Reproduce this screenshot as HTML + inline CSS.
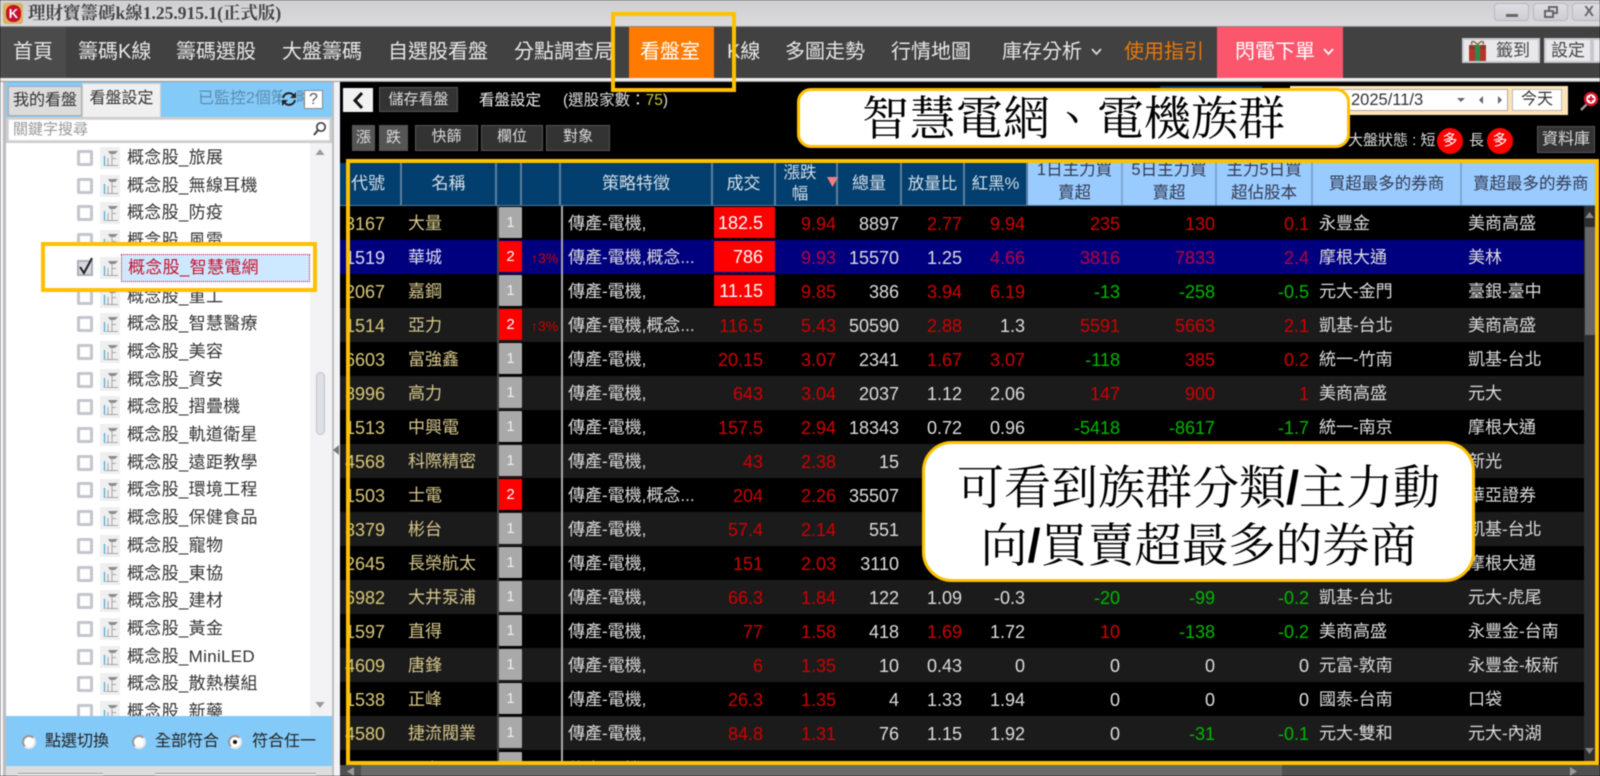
<!DOCTYPE html>
<html lang="zh-Hant"><head><meta charset="utf-8"><title>理財寶籌碼k線</title>
<style>
*{box-sizing:border-box;margin:0;padding:0}
html,body{width:1600px;height:776px;overflow:hidden;background:#000}
body{position:relative;font-family:"Liberation Sans","Noto Sans CJK TC",sans-serif;color:#ddd}
#root{position:absolute;left:0;top:0;width:1600px;height:776px;overflow:hidden;background:#000;filter:blur(.45px)}
.a{position:absolute;white-space:nowrap}
.n{position:absolute;top:27px;height:50px;line-height:50px;font-size:20px;color:#e8e8e8;white-space:nowrap}
.wb{position:absolute;top:3px;height:18px;width:35px;border:1px solid #b8b8bc;border-radius:4px;background:linear-gradient(#dedee2,#cfcfd3)}
.btn{position:absolute;background:#333;border:1px solid #555;color:#ddd;font-size:15px;text-align:center}
.tb{position:absolute;background:#e9e9ec;border:2px solid #c8c8cc;color:#444;font-size:17px;text-align:center;line-height:21px}
.li{position:absolute;left:0;width:304px;height:28px;font-size:17px;color:#333;line-height:28px}
.li b{position:absolute;left:71px;top:6px;width:16px;height:16px;background:#fff;border:3px solid #c5c5cd;border-radius:2px}
.li svg{position:absolute;left:94px;top:3px}
.li span{position:absolute;left:121px;letter-spacing:.3px;white-space:nowrap}
.rd{position:absolute;top:735px;width:14px;height:14px;border-radius:50%;background:#fff;border:2px solid #999;border-right-color:#e8e8e8;border-bottom-color:#e8e8e8}
.h{position:absolute;top:163px;height:42px;background:#023f6e;border-right:2px solid #5c7f9e;color:#d5dee8;font-size:17px;text-align:center;line-height:42px;overflow:hidden}
.l{background:#99cbff;border-right:2px solid #7fa6cf;color:#333a52}
.l2{line-height:23px;font-size:16.5px;padding-top:0;top:159px;height:46px;z-index:0}
#rows{position:absolute;left:340px;top:206px;width:1244px;height:559px;overflow:hidden}
.r{position:absolute;left:0;width:1244px;height:34px;font-size:18px;line-height:34px}
.r:nth-child(even){background:#1b1b1b}
.r span{position:absolute;white-space:nowrap;top:1px}
.sel{background:#00007f!important}
.c{left:0;width:45px;text-align:right;color:#d8c878}
.m{left:68px;font-size:17px;color:#d8c98e}
.b{left:159px;top:1px!important;width:23px;height:31px;background:#a9a9a9;color:#eee;font-size:15px;text-align:center;line-height:31px;border-radius:1px}
.b.t{background:#f00;color:#fff}
.p{left:191px;font-size:14px;color:#d00000}
.s{left:228px;font-size:17px;color:#dcdcdc}
.x{left:374px;top:1px!important;width:61px;height:31px;line-height:32px;background:#f00;color:#fff;text-align:right;padding-right:12px}
.o{left:354px;width:69px;text-align:right;color:#d00000}
.f{left:436px;width:60px;text-align:right;color:#d00000}
.v{left:500px;width:59px;text-align:right;color:#ddd}
.e{left:563px;width:59px;text-align:right;color:#ddd}
.k{left:626px;width:59px;text-align:right;color:#ddd}
.d1{left:690px;width:90px;text-align:right;color:#ddd}
.d5{left:785px;width:90px;text-align:right;color:#ddd}
.dp{left:880px;width:89px;text-align:right;color:#ddd}
.bb{left:979px;font-size:17px;color:#ddd}
.sb{left:1128px;font-size:17px;color:#ddd}
.red{color:#d00000!important}.grn{color:#00b800!important}
.call{position:absolute;background:#fff;border:3.5px solid #ffc000;color:#000;font-family:"Noto Serif CJK SC","Liberation Serif",serif;font-size:47px;text-align:center;font-weight:400}
.call i{font-style:normal;font-weight:700;font-family:"Liberation Sans",sans-serif}
</style></head><body><div id="root">
<svg width="0" height="0" style="position:absolute"><symbol id="ic" viewBox="0 0 20 22"><rect width="20" height="22" fill="#efefef"/><path d="M8 4h10l-3 3h-5z" fill="#8c8c8c"/><path d="M12 7v11M8 11v7M6 18.500h12M12 11.500h4" fill="none" stroke="#a6a6a6" stroke-width="1"/><path d="M4.500 9v10" stroke="#4aa7dc" stroke-width="1.200"/></symbol></svg>

<!-- title bar -->
<div class="a" style="left:0;top:0;width:1600px;height:27px;background:linear-gradient(#cfcfd2,#dadadd);border-bottom:1px solid #8a8a8a"></div>
<div class="a" style="left:3px;top:3px;width:20px;height:21px;background:#d8b45a;border-radius:3px"></div>
<div class="a" style="left:6px;top:5px;width:15px;height:17px;background:#c8102e;border-radius:7px;color:#fff;font-size:13px;font-weight:700;text-align:center;line-height:17px">K</div>
<div class="a" style="left:28px;top:2px;font-family:'Liberation Serif','Noto Serif CJK SC',serif;font-size:17.5px;line-height:22px;color:#444;font-weight:700">理財寶籌碼k線1.25.915.1(正式版)</div>
<div class="wb" style="left:1494px"><div class="a" style="left:11px;top:10px;width:12px;height:3px;background:#666"></div></div>
<div class="wb" style="left:1533px"><div class="a" style="left:14px;top:2px;width:10px;height:8px;border:2px solid #666"></div><div class="a" style="left:10px;top:6px;width:10px;height:8px;border:2px solid #666;background:#d8d8dc"></div></div>
<div class="wb" style="left:1572px;width:40px;font-size:15px;font-weight:700;color:#666;line-height:15px;padding-left:11px">X</div>

<!-- nav -->
<div class="a" style="left:0;top:27px;width:1600px;height:51px;background:#414141"></div>
<div class="a" style="left:0;top:27px;width:66px;height:51px;background:#4b4b4b"></div>
<div class="a" style="left:629px;top:27px;width:85px;height:51px;background:#ff7a00"></div>
<div class="a" style="left:1217px;top:27px;width:126px;height:51px;background:#fb566c"></div>
<div class="n" style="left:13px">首頁</div>
<div class="n" style="left:78px">籌碼K線</div>
<div class="n" style="left:176px">籌碼選股</div>
<div class="n" style="left:282px">大盤籌碼</div>
<div class="n" style="left:388px">自選股看盤</div>
<div class="n" style="left:514px">分點調查局</div>
<div class="n" style="left:640px;color:#fff">看盤室</div>
<div class="n" style="left:727px">K線</div>
<div class="n" style="left:785px">多圖走勢</div>
<div class="n" style="left:891px">行情地圖</div>
<div class="n" style="left:1002px">庫存分析</div>
<svg class="a" style="left:1091px;top:48px" width="11" height="8"><path d="M1 1l4.500 5L10 1" fill="none" stroke="#ddd" stroke-width="1.700"/></svg>
<div class="n" style="left:1124px;color:#e8780c">使用指引</div>
<div class="n" style="left:1235px;color:#fff">閃電下單</div>
<svg class="a" style="left:1323px;top:48px" width="11" height="8"><path d="M1 1l4.500 5L10 1" fill="none" stroke="#fff" stroke-width="1.700"/></svg>
<div class="tb" style="left:1462px;top:38px;width:78px;height:25px;padding-left:24px">籤到</div>
<svg class="a" style="left:1468px;top:40px" width="19" height="21"><rect x="1" y="7" width="17" height="14" fill="#b5342c"/><rect x="1" y="5" width="17" height="4" fill="#8a3a30"/><rect x="7" y="5" width="5" height="16" fill="#2f8a4a"/><path d="M9.500 5C6 0 2 1 4 4.500M9.500 5C13 0 17 1 15 4.500" fill="none" stroke="#8a6a3a" stroke-width="1.500"/></svg>
<div class="tb" style="left:1544px;top:38px;width:48px;height:25px">設定</div>
<div class="tb" style="left:1592px;top:38px;width:20px;height:25px"></div>
<div class="a" style="left:0;top:78px;width:1600px;height:4px;background:#eee;border-bottom:1px solid #999"></div>

<!-- left panel -->
<div class="a" style="left:0;top:82px;width:340px;height:694px;background:#f3f3f5"></div>
<div class="a" style="left:3px;top:82px;width:3px;height:694px;background:#bdbdc0"></div>
<div class="a" style="left:332px;top:82px;width:2px;height:694px;background:#bdbdc0"></div>
<div class="a" style="left:6px;top:82px;width:326px;height:35px;background:#84caf9"></div>
<div class="a" style="left:8px;top:86px;width:74px;height:30px;background:#dcdcdc;border:1px solid #aaa;font-size:16px;color:#333;text-align:center;line-height:28px">我的看盤</div>
<div class="a" style="left:82px;top:83px;width:79px;height:34px;background:#f0f0f0;border:1px solid #ccc;border-bottom:0;font-size:16px;color:#333;text-align:center;line-height:30px">看盤設定</div>
<div class="a" style="left:198px;top:87px;width:84px;overflow:hidden;font-size:16px;line-height:24px;color:#5c8cae">已監控2個策略</div>
<div class="a" style="left:296px;top:87px;width:8px;overflow:hidden;font-size:16px;line-height:24px;color:#5c8cae">略</div>
<svg class="a" style="left:280px;top:90px" width="18" height="18"><path d="M3 8a6 6 0 0 1 11-2M15 10a6 6 0 0 1-11 2" fill="none" stroke="#222" stroke-width="2"/><path d="M16 2v6h-6zM2 16v-6h6z" fill="#222"/></svg>
<div class="a" style="left:304px;top:90px;width:19px;height:19px;background:#fff;border:1px solid #888;font-size:16px;line-height:17px;text-align:center;color:#555">?</div>
<div class="a" style="left:6px;top:117px;width:326px;height:26px;background:#ccc"></div>
<div class="a" style="left:8px;top:119px;width:322px;height:22px;background:#fff;border:1px solid #ddd;font-size:15px;line-height:20px;color:#999;padding-left:4px">關鍵字搜尋</div>
<svg class="a" style="left:312px;top:121px" width="15" height="15"><circle cx="9" cy="6" r="4.200" fill="none" stroke="#444" stroke-width="1.700"/><path d="M6 9l-4 5" stroke="#444" stroke-width="2"/></svg>
<div class="a" style="left:6px;top:143px;width:304px;height:573px;background:#fff"></div>

<div class="a" style="left:6px;top:142px;width:304px;height:574px;overflow:hidden">
<div class="li" style="top:2px"><b></b><svg width="20" height="22"><use href="#ic"/></svg><span>概念股_旅展</span></div>
<div class="li" style="top:29.7px"><b></b><svg width="20" height="22"><use href="#ic"/></svg><span>概念股_無線耳機</span></div>
<div class="li" style="top:57.4px"><b></b><svg width="20" height="22"><use href="#ic"/></svg><span>概念股_防疫</span></div>
<div class="li" style="top:85.1px"><b></b><svg width="20" height="22"><use href="#ic"/></svg><span>概念股_風電</span></div>
<div class="li" style="top:140.5px"><b></b><svg width="20" height="22"><use href="#ic"/></svg><span>概念股_重工</span></div>
<div class="li" style="top:168.2px"><b></b><svg width="20" height="22"><use href="#ic"/></svg><span>概念股_智慧醫療</span></div>
<div class="li" style="top:195.9px"><b></b><svg width="20" height="22"><use href="#ic"/></svg><span>概念股_美容</span></div>
<div class="li" style="top:223.6px"><b></b><svg width="20" height="22"><use href="#ic"/></svg><span>概念股_資安</span></div>
<div class="li" style="top:251.3px"><b></b><svg width="20" height="22"><use href="#ic"/></svg><span>概念股_摺疊機</span></div>
<div class="li" style="top:279px"><b></b><svg width="20" height="22"><use href="#ic"/></svg><span>概念股_軌道衛星</span></div>
<div class="li" style="top:306.7px"><b></b><svg width="20" height="22"><use href="#ic"/></svg><span>概念股_遠距教學</span></div>
<div class="li" style="top:334.4px"><b></b><svg width="20" height="22"><use href="#ic"/></svg><span>概念股_環境工程</span></div>
<div class="li" style="top:362.1px"><b></b><svg width="20" height="22"><use href="#ic"/></svg><span>概念股_保健食品</span></div>
<div class="li" style="top:389.8px"><b></b><svg width="20" height="22"><use href="#ic"/></svg><span>概念股_寵物</span></div>
<div class="li" style="top:417.5px"><b></b><svg width="20" height="22"><use href="#ic"/></svg><span>概念股_東協</span></div>
<div class="li" style="top:445.2px"><b></b><svg width="20" height="22"><use href="#ic"/></svg><span>概念股_建材</span></div>
<div class="li" style="top:472.9px"><b></b><svg width="20" height="22"><use href="#ic"/></svg><span>概念股_黃金</span></div>
<div class="li" style="top:500.6px"><b></b><svg width="20" height="22"><use href="#ic"/></svg><span>概念股_MiniLED</span></div>
<div class="li" style="top:528.3px"><b></b><svg width="20" height="22"><use href="#ic"/></svg><span>概念股_散熱模組</span></div>
<div class="li" style="top:556px"><b></b><svg width="20" height="22"><use href="#ic"/></svg><span>概念股_新藥</span></div>
</div>

<!-- list scrollbar -->
<div class="a" style="left:310px;top:143px;width:22px;height:573px;background:#f3f3f5"></div>
<div class="a" style="left:316px;top:372px;width:9px;height:63px;background:#dfe0e6;border:1px solid #c2c3cb;border-radius:5px"></div>
<svg class="a" style="left:315px;top:149px" width="10" height="7"><path d="M5 0l4.500 6H.5z" fill="#999"/></svg>
<svg class="a" style="left:315px;top:701px" width="10" height="7"><path d="M5 7L.5 1h9z" fill="#999"/></svg>
<svg class="a" style="left:333px;top:445px" width="6" height="10"><path d="M0 5l6-5v10z" fill="#777"/></svg>

<!-- highlighted list row -->
<div class="a" style="left:41px;top:242px;width:276px;height:50px;background:#fff;border:4px solid #ffc000"></div>
<div class="a" style="left:77px;top:260px;width:16px;height:16px;background:#d6d6df;border:2px solid #b0b0bb"></div>
<svg class="a" style="left:77px;top:256px" width="18" height="20"><path d="M3 11l4 6 8-15" fill="none" stroke="#222" stroke-width="2"/></svg>
<svg class="a" style="left:100px;top:257px" width="20" height="22"><use href="#ic"/></svg>
<div class="a" style="left:121px;top:254px;width:189px;height:28px;background:#cde9ff;border:1px dotted #d8103a;font-size:17px;line-height:26px;color:#c8102e;padding-left:6px;letter-spacing:.3px">概念股_智慧電網</div>

<!-- radio band -->
<div class="a" style="left:6px;top:716px;width:326px;height:50px;background:#84caf9"></div>
<div class="rd" style="left:22px"></div>
<div class="a" style="left:45px;top:731px;font-size:16px;line-height:22px;color:#222">點選切換</div>
<div class="rd" style="left:132px"></div>
<div class="a" style="left:155px;top:731px;font-size:16px;line-height:22px;color:#222">全部符合</div>
<div class="rd" style="left:228px"></div>
<div class="a" style="left:233px;top:740px;width:4px;height:4px;border-radius:50%;background:#111"></div>
<div class="a" style="left:252px;top:731px;font-size:16px;line-height:22px;color:#222">符合任一</div>
<div class="a" style="left:6px;top:766px;width:326px;height:10px;background:#dcdcdc"></div>
<div class="a" style="left:18px;top:773px;width:85px;height:3px;background:#f4f4f4;border-top:1px solid #999"></div>
<div class="a" style="left:155px;top:773px;width:161px;height:3px;background:#f4f4f4;border-top:1px solid #999"></div>

<!-- toolbar -->
<div class="a" style="left:343px;top:88px;width:30px;height:24px;background:#f2f2f2"></div>
<svg class="a" style="left:351px;top:91px" width="14" height="19"><path d="M11 2L4 9.500l7 7.500" fill="none" stroke="#111" stroke-width="3"/></svg>
<div class="btn" style="left:379px;top:87px;width:79px;height:25px;line-height:23px">儲存看盤</div>
<div class="a" style="left:479px;top:89px;font-size:15.5px;line-height:24px;color:#eee">看盤設定</div>
<div class="a" style="left:563px;top:89px;font-size:15.5px;line-height:24px;color:#ddd">(選股家數：<span style="color:#c8c832">75</span>)</div>
<div class="btn" style="left:352px;top:125px;width:23px;height:26px;line-height:24px;background:#555">漲</div>
<div class="btn" style="left:379px;top:125px;width:29px;height:26px;line-height:24px;background:#555">跌</div>
<div class="btn" style="left:415px;top:125px;width:63px;height:26px;line-height:22px">快篩</div>
<div class="btn" style="left:481px;top:125px;width:62px;height:26px;line-height:22px">欄位</div>
<div class="btn" style="left:546px;top:125px;width:64px;height:26px;line-height:22px">對象</div>

<div class="a" style="left:1160px;top:86px;width:102px;height:3px;background:#04406e"></div>
<div class="a" style="left:1290px;top:86px;width:278px;height:29px;background:#fde3b5"></div>
<div class="a" style="left:1300px;top:89px;width:208px;height:22px;background:#fff;border:1px solid #aaa;font-size:16.5px;line-height:21px;color:#333;padding-left:50px">2025/11/3</div>
<svg class="a" style="left:1455px;top:95px" width="50" height="10"><path d="M2 3h8l-4 4zM24 5l4-4v8zM43 1l4 4-4 4z" fill="#666"/></svg>
<div class="a" style="left:1512px;top:89px;width:50px;height:22px;background:#fff;border:1px solid #bbb;font-size:16px;line-height:20px;color:#333;text-align:center">今天</div>
<svg class="a" style="left:1579px;top:92px" width="20" height="20"><path d="M2 18l6-6" stroke="#999" stroke-width="2.500"/><circle cx="12" cy="7" r="6" fill="#fff" stroke="#d8102a" stroke-width="2.500"/><path d="M9 7h6M12 4v6" stroke="#d8102a" stroke-width="2"/></svg>
<div class="a" style="left:1348px;top:129px;font-size:15px;line-height:24px;color:#ddd">大盤狀態 : 短</div>
<div class="a" style="left:1437px;top:128px;width:26px;height:26px;border-radius:50%;background:#f00;color:#fff;font-size:15px;text-align:center;line-height:25px">多</div>
<div class="a" style="left:1469px;top:129px;font-size:15px;line-height:24px;color:#ddd">長</div>
<div class="a" style="left:1487px;top:128px;width:26px;height:26px;border-radius:50%;background:#f00;color:#fff;font-size:15px;text-align:center;line-height:25px">多</div>
<div class="btn" style="left:1537px;top:126px;width:58px;height:27px;line-height:25px;font-size:16px">資料庫</div>

<!-- table header -->
<div class="h" style="left:340px;width:62px;padding-right:4px">代號</div>
<div class="h" style="left:402px;width:95px">名稱</div>
<div class="h" style="left:497px;width:25px"></div>
<div class="h" style="left:522px;width:39px"></div>
<div class="h" style="left:561px;width:152px">策略特徵</div>
<div class="h" style="left:713px;width:63px">成交</div>
<div class="h" style="left:776px;width:62px;line-height:21px;padding-right:12px;font-size:16.5px">漲跌<br>幅</div>
<svg class="a" style="left:827px;top:177px" width="11" height="10"><path d="M0 0h11L5.500 10z" fill="#f08080"/></svg>
<div class="h" style="left:838px;width:64px">總量</div>
<div class="h" style="left:902px;width:63px;font-size:16.5px">放量比</div>
<div class="h" style="left:965px;width:63px;font-size:16.5px">紅黑%</div>
<div class="h l l2" style="left:1028px;width:95px">1日主力買<br>賣超</div>
<div class="h l l2" style="left:1123px;width:94px">5日主力買<br>賣超</div>
<div class="h l l2" style="left:1217px;width:96px">主力5日買<br>超佔股本</div>
<div class="h l" style="left:1313px;width:149px;font-size:16.5px">買超最多的券商</div>
<div class="h l" style="left:1462px;width:133px;font-size:16.5px;border:0;text-align:left;padding-left:11px">賣超最多的券商</div>
<div class="a" style="left:340px;top:205px;width:1255px;height:1px;background:#4a7ba8"></div>

<!-- rows -->
<div id="rows">
<div class="r" style="top:0"><span class="c">3167</span><span class="m">大量</span><span class="b">1</span><span class="s">傳產-電機,</span><span class="x">182.5</span><span class="f">9.94</span><span class="v">8897</span><span class="e red">2.77</span><span class="k red">9.94</span><span class="d1 red">235</span><span class="d5 red">130</span><span class="dp red">0.1</span><span class="bb">永豐金</span><span class="sb">美商高盛</span></div>
<div class="r sel" style="top:34px"><span class="c" style="color:#dcdcf0">1519</span><span class="m" style="color:#dcdcf0">華城</span><span class="b t">2</span><span class="p">↑3%</span><span class="s">傳產-電機,概念...</span><span class="x">786</span><span class="f" style="color:#b80040">9.93</span><span class="v">15570</span><span class="e">1.25</span><span class="k red" style="color:#b80040!important">4.66</span><span class="d1 red" style="color:#b80040!important">3816</span><span class="d5 red" style="color:#b80040!important">7833</span><span class="dp red" style="color:#b80040!important">2.4</span><span class="bb">摩根大通</span><span class="sb">美林</span></div>
<div class="r" style="top:68px"><span class="c">2067</span><span class="m">嘉鋼</span><span class="b">1</span><span class="s">傳產-電機,</span><span class="x">11.15</span><span class="f">9.85</span><span class="v">386</span><span class="e red">3.94</span><span class="k red">6.19</span><span class="d1 grn">-13</span><span class="d5 grn">-258</span><span class="dp grn">-0.5</span><span class="bb">元大-金門</span><span class="sb">臺銀-臺中</span></div>
<div class="r" style="top:102px"><span class="c">1514</span><span class="m">亞力</span><span class="b t">2</span><span class="p">↑3%</span><span class="s">傳產-電機,概念...</span><span class="o">116.5</span><span class="f">5.43</span><span class="v">50590</span><span class="e red">2.88</span><span class="k">1.3</span><span class="d1 red">5591</span><span class="d5 red">5663</span><span class="dp red">2.1</span><span class="bb">凱基-台北</span><span class="sb">美商高盛</span></div>
<div class="r" style="top:136px"><span class="c">6603</span><span class="m">富強鑫</span><span class="b">1</span><span class="s">傳產-電機,</span><span class="o">20.15</span><span class="f">3.07</span><span class="v">2341</span><span class="e red">1.67</span><span class="k red">3.07</span><span class="d1 grn">-118</span><span class="d5 red">385</span><span class="dp red">0.2</span><span class="bb">統一-竹南</span><span class="sb">凱基-台北</span></div>
<div class="r" style="top:170px"><span class="c">8996</span><span class="m">高力</span><span class="b">1</span><span class="s">傳產-電機,</span><span class="o">643</span><span class="f">3.04</span><span class="v">2037</span><span class="e">1.12</span><span class="k">2.06</span><span class="d1 red">147</span><span class="d5 red">900</span><span class="dp red">1</span><span class="bb">美商高盛</span><span class="sb">元大</span></div>
<div class="r" style="top:204px"><span class="c">1513</span><span class="m">中興電</span><span class="b">1</span><span class="s">傳產-電機,</span><span class="o">157.5</span><span class="f">2.94</span><span class="v">18343</span><span class="e">0.72</span><span class="k">0.96</span><span class="d1 grn">-5418</span><span class="d5 grn">-8617</span><span class="dp grn">-1.7</span><span class="bb">統一-南京</span><span class="sb">摩根大通</span></div>
<div class="r" style="top:238px"><span class="c">4568</span><span class="m">科際精密</span><span class="b">1</span><span class="s">傳產-電機,</span><span class="o">43</span><span class="f">2.38</span><span class="v">15</span><span class="sb">新光</span></div>
<div class="r" style="top:272px"><span class="c">1503</span><span class="m">士電</span><span class="b t">2</span><span class="s">傳產-電機,概念...</span><span class="o">204</span><span class="f">2.26</span><span class="v">35507</span><span class="sb">華亞證券</span></div>
<div class="r" style="top:306px"><span class="c">8379</span><span class="m">彬台</span><span class="b">1</span><span class="s">傳產-電機,</span><span class="o">57.4</span><span class="f">2.14</span><span class="v">551</span><span class="sb">凱基-台北</span></div>
<div class="r" style="top:340px"><span class="c">2645</span><span class="m">長榮航太</span><span class="b">1</span><span class="s">傳產-電機,</span><span class="o">151</span><span class="f">2.03</span><span class="v">3110</span><span class="sb">摩根大通</span></div>
<div class="r" style="top:374px"><span class="c">6982</span><span class="m">大井泵浦</span><span class="b">1</span><span class="s">傳產-電機,</span><span class="o">66.3</span><span class="f">1.84</span><span class="v">122</span><span class="e">1.09</span><span class="k">-0.3</span><span class="d1 grn">-20</span><span class="d5 grn">-99</span><span class="dp grn">-0.2</span><span class="bb">凱基-台北</span><span class="sb">元大-虎尾</span></div>
<div class="r" style="top:408px"><span class="c">1597</span><span class="m">直得</span><span class="b">1</span><span class="s">傳產-電機,</span><span class="o">77</span><span class="f">1.58</span><span class="v">418</span><span class="e red">1.69</span><span class="k">1.72</span><span class="d1 red">10</span><span class="d5 grn">-138</span><span class="dp grn">-0.2</span><span class="bb">美商高盛</span><span class="sb">永豐金-台南</span></div>
<div class="r" style="top:442px"><span class="c">4609</span><span class="m">唐鋒</span><span class="b">1</span><span class="s">傳產-電機,</span><span class="o">6</span><span class="f">1.35</span><span class="v">10</span><span class="e">0.43</span><span class="k">0</span><span class="d1">0</span><span class="d5">0</span><span class="dp">0</span><span class="bb">元富-敦南</span><span class="sb">永豐金-板新</span></div>
<div class="r" style="top:476px"><span class="c">1538</span><span class="m">正峰</span><span class="b">1</span><span class="s">傳產-電機,</span><span class="o">26.3</span><span class="f">1.35</span><span class="v">4</span><span class="e">1.33</span><span class="k">1.94</span><span class="d1">0</span><span class="d5">0</span><span class="dp">0</span><span class="bb">國泰-台南</span><span class="sb">口袋</span></div>
<div class="r" style="top:510px"><span class="c">4580</span><span class="m">捷流閥業</span><span class="b">1</span><span class="s">傳產-電機,</span><span class="o">84.8</span><span class="f">1.31</span><span class="v">76</span><span class="e">1.15</span><span class="k">1.92</span><span class="d1">0</span><span class="d5 grn">-31</span><span class="dp grn">-0.1</span><span class="bb">元大-雙和</span><span class="sb">元大-內湖</span></div>
<div class="r" style="top:546px"><span class="m">全台</span><span class="b" style="top:0!important">1</span><span class="s">傳產-電機,</span></div>
</div>
<div class="a" style="left:497px;top:206px;width:2px;height:559px;background:#444"></div>
<div class="a" style="left:561px;top:206px;width:2px;height:559px;background:#aaa"></div>

<!-- table scrollbars -->
<div class="a" style="left:1584px;top:206px;width:11px;height:559px;background:#2e2e2e"></div>
<div class="a" style="left:1585px;top:227px;width:10px;height:108px;background:#666"></div>
<svg class="a" style="left:1585px;top:212px" width="9" height="6"><path d="M4.500 0L9 6H0z" fill="#888"/></svg>
<svg class="a" style="left:1585px;top:748px" width="9" height="6"><path d="M4.500 6L9 0H0z" fill="#888"/></svg>
<div class="a" style="left:340px;top:765px;width:1260px;height:11px;background:#4f4f4f"></div>
<div class="a" style="left:361px;top:765px;width:921px;height:11px;background:#6a6a6a"></div>
<svg class="a" style="left:347px;top:767px" width="7" height="9"><path d="M0 4.500L7 0v9z" fill="#999"/></svg>
<svg class="a" style="left:1570px;top:767px" width="7" height="9"><path d="M7 4.500L0 0v9z" fill="#999"/></svg>

<!-- overlays -->
<div class="a" style="left:346px;top:159px;width:1253px;height:606px;border:4px solid #ffc000"></div>
<div class="a" style="left:611px;top:12px;width:125px;height:80px;border:4px solid #ffc000"></div>
<div class="call" style="left:797px;top:88px;width:553px;height:60px;border-radius:14px;line-height:50px">智慧電網、電機族群</div>
<div class="call" style="left:922px;top:441px;width:553px;height:141px;border-radius:30px;line-height:55px;padding-top:13px;border-width:3px">可看到族群分類<i>/</i>主力動<br>向<i>/</i>買賣超最多的券商</div>
</div></body></html>
